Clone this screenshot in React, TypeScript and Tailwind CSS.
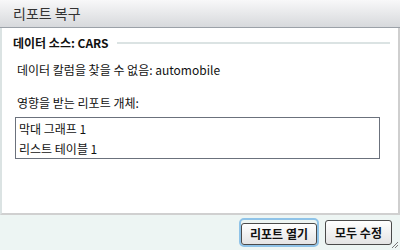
import React from 'react';

const font = { fontFamily: '"Noto Sans CJK KR", "Liberation Sans", sans-serif' };

const ResizeGrip: React.FC = () => (
  <svg width="8" height="8" viewBox="0 0 8 8" className="absolute right-[1px] bottom-[1px]">
    <line x1="7" y1="1" x2="1" y2="7" stroke="#777" strokeWidth="1" />
    <line x1="7" y1="4" x2="4" y2="7" stroke="#777" strokeWidth="1" />
  </svg>
);

export default function App() {
  return (
    <div className="relative w-[400px] h-[250px] flex flex-col bg-white text-[#111]" style={font}>
      {/* Title bar */}
      <div className="h-[28px] shrink-0 flex items-center pl-[13px] text-[14px] text-[#333] bg-gradient-to-b from-[#f8f8f9] to-[#d7d9dc] border-b border-[#9ba1a8]">
        리포트 복구
      </div>

      {/* Body */}
      <div className="flex-1 border-l-2 border-r-2 border-b-2 border-l-[#dbe3e3] border-r-[#cfcfcf] border-b-[#d0d0d0] pl-[11px] pr-[8px] pt-[7px]">
        <div className="flex items-center gap-[8px] h-[16px]">
          <span className="text-[12px] font-bold whitespace-nowrap">데이터 소스: CARS</span>
          <div className="flex-1 h-[2px] bg-[#dbe3e3]" />
        </div>
        <div className="pl-[4px] pt-[11px] text-[12px] leading-[16px]">
          데이터 칼럼을 찾을 수 없음: automobile
        </div>
        <div className="pl-[4px] pt-[17px] text-[12px] leading-[16px]">영향을 받는 리포트 개체:</div>
        <div className="ml-[2px] mr-[10px] mt-[6px] h-[42px] border border-[#6b717c] pl-[3px] pt-[1px] text-[12px] leading-[20px]">
          <div>막대 그래프 1</div>
          <div>리스트 테이블 1</div>
        </div>
      </div>

      {/* Footer */}
      <div className="h-[35px] shrink-0 bg-[#edf5f3] flex items-center justify-end gap-[6px] pr-[8px]">
        <div className="rounded-[5px] border-2 border-[#8fc3e8]">
          <button className="h-[22px] w-[76px] rounded-[3px] border border-[#4a4a4a] bg-gradient-to-b from-white to-[#e4e4e4] text-[12px] font-bold text-[#111]" style={font}>
            리포트 열기
          </button>
        </div>
        <button className="h-[25px] w-[67px] rounded-[3px] border border-[#4a4a4a] bg-gradient-to-b from-white to-[#e4e4e4] text-[12px] font-bold text-[#111]" style={font}>
          모두 수정
        </button>
      </div>
      <ResizeGrip />
    </div>
  );
}
